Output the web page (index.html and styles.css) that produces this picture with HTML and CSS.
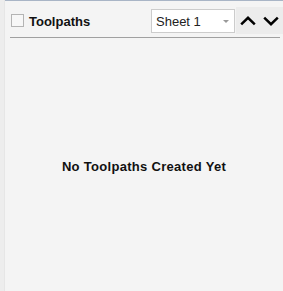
FILE: index.html
```html
<!DOCTYPE html>
<html lang="en">
<head>
    <meta charset="UTF-8">
    <title>Toolpaths</title>
    <link rel="stylesheet" href="styles.css">
</head>
<body>
    <div class="panel">
        <div class="side"></div>
        <div class="main">
            <div class="header">
                <span class="check"></span>
                <span class="title">Toolpaths</span>
                <div class="sheet-select">
                    <span>Sheet 1</span>
                    <span class="caret"></span>
                </div>
                <div class="arrows">
                    <svg width="16" height="10" viewBox="0 0 16 10"><path d="M1.2 8.3 L8 1.8 L14.8 8.3" fill="none" stroke="#000" stroke-width="2.5"/></svg>
                    <svg width="16" height="10" viewBox="0 0 16 10"><path d="M1.2 1.7 L8 8.2 L14.8 1.7" fill="none" stroke="#000" stroke-width="2.5"/></svg>
                </div>
            </div>
            <div class="empty">No Toolpaths Created Yet</div>
        </div>
    </div>
</body>
</html>
```

FILE: styles.css
```css
html, body {
    margin: 0;
    padding: 0;
    background-color: #f4f4f4;
    font-family: "Liberation Sans", Arial, sans-serif;
}
.panel {
    display: flex;
    width: 283px;
    height: 291px;
}
.side {
    width: 4px;
    background-color: #ededed;
    border-right: 1px solid #e6e6e6;
}
.main {
    flex: 1;
    display: flex;
    flex-direction: column;
    border-top: 1px solid #a9b5c6;
}
.header {
    display: flex;
    align-items: flex-start;
    height: 36px;
    margin: 0 3px 0 5px;
    padding-left: 1px;
    border-bottom: 1px solid #a0a0a0;
}
.check {
    width: 11px;
    height: 11px;
    border: 1px solid #b4b4b4;
    background-color: #f7f7f7;
    margin-top: 13px;
}
.title {
    font-size: 13px;
    line-height: 15px;
    font-weight: bold;
    color: #111;
    margin-left: 5px;
    margin-top: 13px;
}
.sheet-select {
    display: flex;
    align-items: center;
    justify-content: space-between;
    margin-left: auto;
    width: 74px;
    height: 22px;
    padding: 0 4px 0 4px;
    background-color: #fff;
    border: 1px solid #cccccc;
    font-size: 13px;
    color: #222;
    margin-top: 8px;
}
.caret {
    width: 0;
    height: 0;
    border-left: 3px solid transparent;
    border-right: 3px solid transparent;
    border-top: 3px solid #999;
    margin-right: 1px;
}
.arrows {
    display: flex;
    align-items: center;
    gap: 7px;
    height: 27px;
    margin-left: 1px;
    margin-right: -3px;
    margin-top: 6px;
    padding: 0 4px;
    background-color: #ececec;
}
.empty {
    flex: 1;
    display: flex;
    align-items: center;
    justify-content: center;
    font-size: 13px;
    letter-spacing: 0.3px;
    font-weight: bold;
    color: #111;
    padding-top: 3px;
}
```
